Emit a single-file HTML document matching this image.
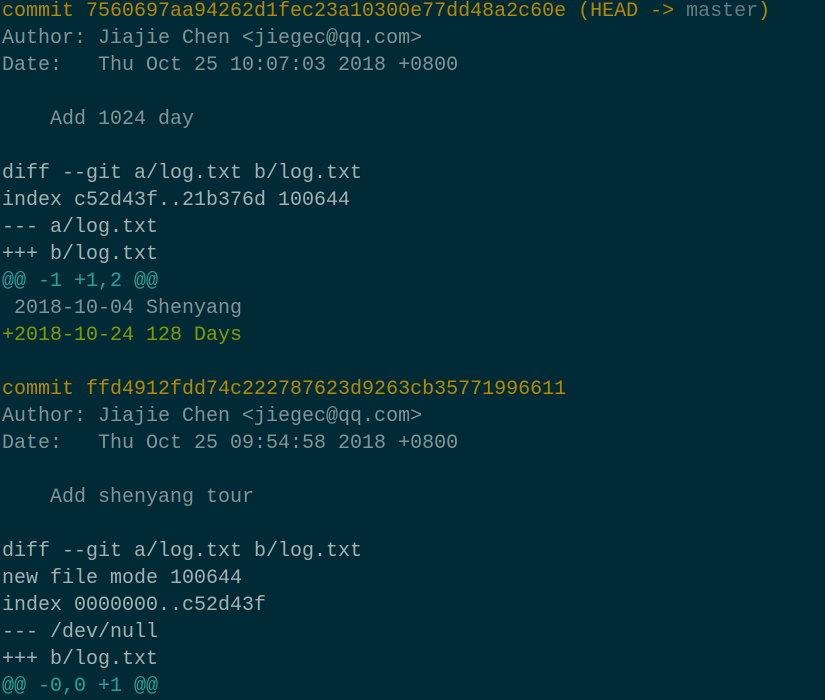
<!DOCTYPE html>
<html><head><meta charset="utf-8"><style>
html,body{margin:0;padding:0;background:#002b36;width:825px;height:698px;overflow:hidden}
pre{margin:0;position:absolute;top:-2px;left:2px;font-family:"Liberation Mono",monospace;font-size:20px;line-height:27px;color:#839496;white-space:pre}
.y{color:#b58900}.c{color:#2aa198}.g{color:#859900}.b{color:#a3b1b1}.m{color:#657b83}
</style></head><body><pre><span class="y">commit 7560697aa94262d1fec23a10300e77dd48a2c60e (</span><span class="y">HEAD -&gt; </span><span class="m">master</span><span class="y">)</span>
Author: Jiajie Chen &lt;jiegec@qq.com&gt;
Date:   Thu Oct 25 10:07:03 2018 +0800

    Add 1024 day

<span class="b">diff --git a/log.txt b/log.txt</span>
<span class="b">index c52d43f..21b376d 100644</span>
<span class="b">--- a/log.txt</span>
<span class="b">+++ b/log.txt</span>
<span class="c">@@ -1 +1,2 @@</span>
 2018-10-04 Shenyang
<span class="g">+2018-10-24 128 Days</span>

<span class="y">commit ffd4912fdd74c222787623d9263cb35771996611</span>
Author: Jiajie Chen &lt;jiegec@qq.com&gt;
Date:   Thu Oct 25 09:54:58 2018 +0800

    Add shenyang tour

<span class="b">diff --git a/log.txt b/log.txt</span>
<span class="b">new file mode 100644</span>
<span class="b">index 0000000..c52d43f</span>
<span class="b">--- /dev/null</span>
<span class="b">+++ b/log.txt</span>
<span class="c">@@ -0,0 +1 @@</span>
</pre></body></html>
